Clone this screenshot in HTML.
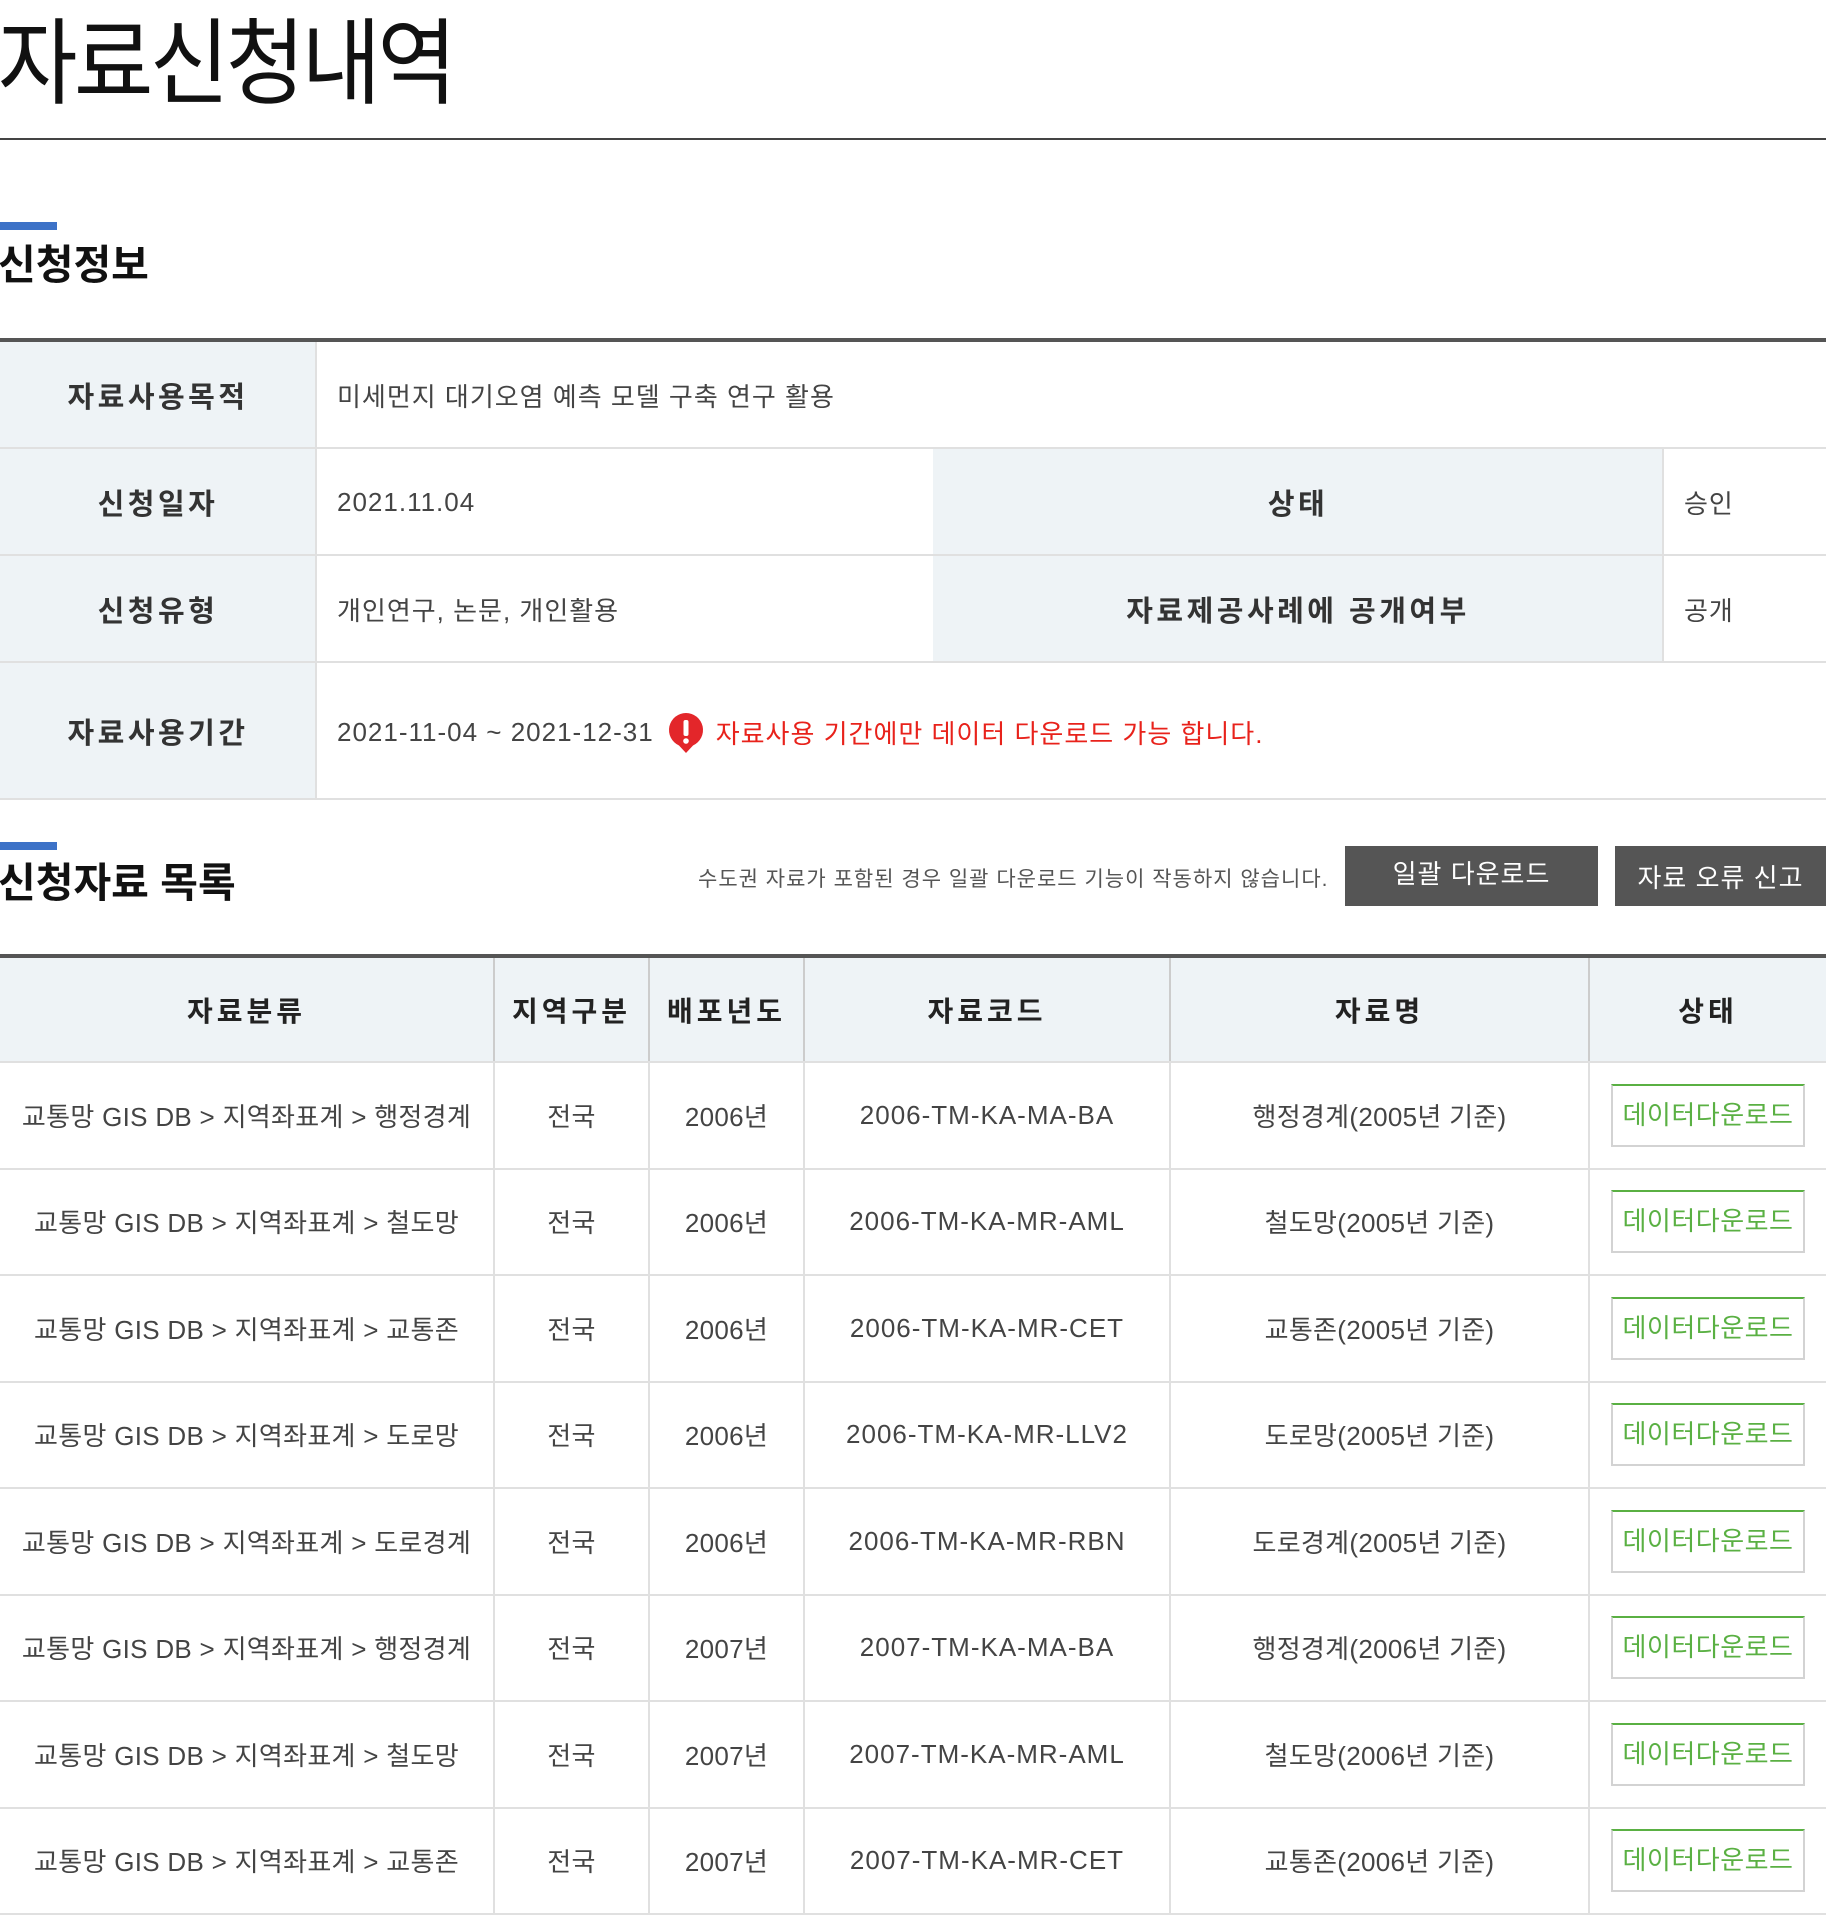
<!DOCTYPE html>
<html><head><meta charset="utf-8">
<style>
*{margin:0;padding:0;box-sizing:border-box}
body{width:1826px;height:1812px;overflow:hidden;background:#fff;font-family:"Liberation Sans","Noto Sans CJK KR",sans-serif;color:#444;position:relative}
.abs{position:absolute;white-space:nowrap}
h1{position:absolute;left:-2px;top:9px;font-size:94px;font-weight:400;color:#111;letter-spacing:-4px;line-height:110px;white-space:nowrap;transform:scaleX(0.92);transform-origin:left}
.hr{position:absolute;left:0;top:138px;width:1826px;height:2px;background:#444}
.bar{position:absolute;left:0;width:57px;height:8px;background:#3d72c7}
.h2{position:absolute;left:-2px;font-size:41px;font-weight:700;color:#111;letter-spacing:0;line-height:50px;white-space:nowrap}
.cell{position:absolute;display:flex;align-items:center;font-size:26px;letter-spacing:1px;white-space:nowrap}
.lab{background:#eef3f6;justify-content:center;font-weight:700;color:#333;font-size:29px;letter-spacing:3.5px}
.val{padding-left:21px;color:#444}
.hl{position:absolute;left:0;width:1826px;height:2px;background:#e0e0e0}
.vl{position:absolute;width:2px;background:#e0e0e0}
.btn{position:absolute;top:846px;height:60px;background:#555;color:#fff;font-size:26px;display:flex;align-items:center;justify-content:center;letter-spacing:1px}
table{position:absolute;left:0;top:954px;width:1826px;border-collapse:collapse;table-layout:fixed;border-top:4px solid #555}
th{height:106px;background:#eef3f6;font-size:28px;font-weight:700;color:#222;border-right:2px solid #ccc;border-bottom:2px solid #e0e0e0;letter-spacing:4px}
td{height:106.5px;text-align:center;font-size:26px;color:#444;border-right:2px solid #e0e0e0;border-bottom:2px solid #e0e0e0;letter-spacing:0.3px;white-space:nowrap}
td.c{letter-spacing:1px}
th:last-child,td:last-child{border-right:none}
.dl{display:inline-block;width:194px;height:63px;line-height:58px;border:2px solid #d3d3d3;border-top:2px solid #5ab043;color:#5ab043;font-size:26px;letter-spacing:0.5px}
</style></head><body>
<h1>자료신청내역</h1>
<div class="hr"></div>

<div class="bar" style="top:222px"></div>
<div class="h2" style="top:240px">신청정보</div>

<div style="position:absolute;left:0;top:338px;width:1826px;height:4px;background:#555"></div>
<div class="cell lab" style="left:0;top:342px;width:316px;height:106px">자료사용목적</div>
<div class="cell val" style="left:316px;top:342px;width:1510px;height:106px">미세먼지 대기오염 예측 모델 구축 연구 활용</div>
<div class="hl" style="top:447px"></div>
<div class="cell lab" style="left:0;top:449px;width:316px;height:106px">신청일자</div>
<div class="cell val" style="left:316px;top:449px;width:617px;height:106px">2021.11.04</div>
<div class="cell lab" style="left:933px;top:449px;width:730px;height:106px">상태</div>
<div class="cell val" style="left:1663px;top:449px;width:163px;height:106px">승인</div>
<div class="hl" style="top:554px"></div>
<div class="cell lab" style="left:0;top:556px;width:316px;height:106px">신청유형</div>
<div class="cell val" style="left:316px;top:556px;width:617px;height:106px">개인연구, 논문, 개인활용</div>
<div class="cell lab" style="left:933px;top:556px;width:730px;height:106px">자료제공사례에 공개여부</div>
<div class="cell val" style="left:1663px;top:556px;width:163px;height:106px">공개</div>
<div class="hl" style="top:661px"></div>
<div class="cell lab" style="left:0;top:663px;width:316px;height:135px">자료사용기간</div>
<div class="cell val" style="left:316px;top:663px;width:1510px;height:139px">2021-11-04 ~ 2021-12-31
<svg width="40" height="44" viewBox="0 0 40 44" style="margin:0 10px 0 12px"><path d="M20 2a17 17 0 0 1 7 32.5L20 42l-7-7.5A17 17 0 0 1 20 2z" fill="#e3262a"/><rect x="17.5" y="9" width="5" height="16" rx="2" fill="#fff"/><circle cx="20" cy="30" r="2.8" fill="#fff"/></svg>
<span style="color:#e8221b">자료사용 기간에만 데이터 다운로드 가능 합니다.</span></div>
<div class="hl" style="top:798px"></div>
<div class="vl" style="left:315px;top:342px;height:456px"></div>
<div class="vl" style="left:1662px;top:449px;height:212px"></div>

<div class="bar" style="top:842px"></div>
<div class="h2" style="top:858px">신청자료 목록</div>
<div class="abs" style="left:698px;top:864px;font-size:21px;color:#555;letter-spacing:1px;line-height:32px">수도권 자료가 포함된 경우 일괄 다운로드 기능이 작동하지 않습니다.</div>
<div class="btn" style="left:1345px;width:253px;padding-bottom:8px">일괄 다운로드</div>
<div class="btn" style="left:1615px;width:211px">자료 오류 신고</div>

<table>
<colgroup><col style="width:494px"><col style="width:155px"><col style="width:155px"><col style="width:366px"><col style="width:419px"><col></colgroup>
<tr><th>자료분류</th><th>지역구분</th><th>배포년도</th><th>자료코드</th><th>자료명</th><th>상태</th></tr>
<tr><td>교통망 GIS DB &gt; 지역좌표계 &gt; 행정경계</td><td>전국</td><td>2006년</td><td class="c">2006-TM-KA-MA-BA</td><td>행정경계(2005년 기준)</td><td><span class="dl">데이터다운로드</span></td></tr>
<tr><td>교통망 GIS DB &gt; 지역좌표계 &gt; 철도망</td><td>전국</td><td>2006년</td><td class="c">2006-TM-KA-MR-AML</td><td>철도망(2005년 기준)</td><td><span class="dl">데이터다운로드</span></td></tr>
<tr><td>교통망 GIS DB &gt; 지역좌표계 &gt; 교통존</td><td>전국</td><td>2006년</td><td class="c">2006-TM-KA-MR-CET</td><td>교통존(2005년 기준)</td><td><span class="dl">데이터다운로드</span></td></tr>
<tr><td>교통망 GIS DB &gt; 지역좌표계 &gt; 도로망</td><td>전국</td><td>2006년</td><td class="c">2006-TM-KA-MR-LLV2</td><td>도로망(2005년 기준)</td><td><span class="dl">데이터다운로드</span></td></tr>
<tr><td>교통망 GIS DB &gt; 지역좌표계 &gt; 도로경계</td><td>전국</td><td>2006년</td><td class="c">2006-TM-KA-MR-RBN</td><td>도로경계(2005년 기준)</td><td><span class="dl">데이터다운로드</span></td></tr>
<tr><td>교통망 GIS DB &gt; 지역좌표계 &gt; 행정경계</td><td>전국</td><td>2007년</td><td class="c">2007-TM-KA-MA-BA</td><td>행정경계(2006년 기준)</td><td><span class="dl">데이터다운로드</span></td></tr>
<tr><td>교통망 GIS DB &gt; 지역좌표계 &gt; 철도망</td><td>전국</td><td>2007년</td><td class="c">2007-TM-KA-MR-AML</td><td>철도망(2006년 기준)</td><td><span class="dl">데이터다운로드</span></td></tr>
<tr><td>교통망 GIS DB &gt; 지역좌표계 &gt; 교통존</td><td>전국</td><td>2007년</td><td class="c">2007-TM-KA-MR-CET</td><td>교통존(2006년 기준)</td><td><span class="dl">데이터다운로드</span></td></tr>
</table>
</body></html>
